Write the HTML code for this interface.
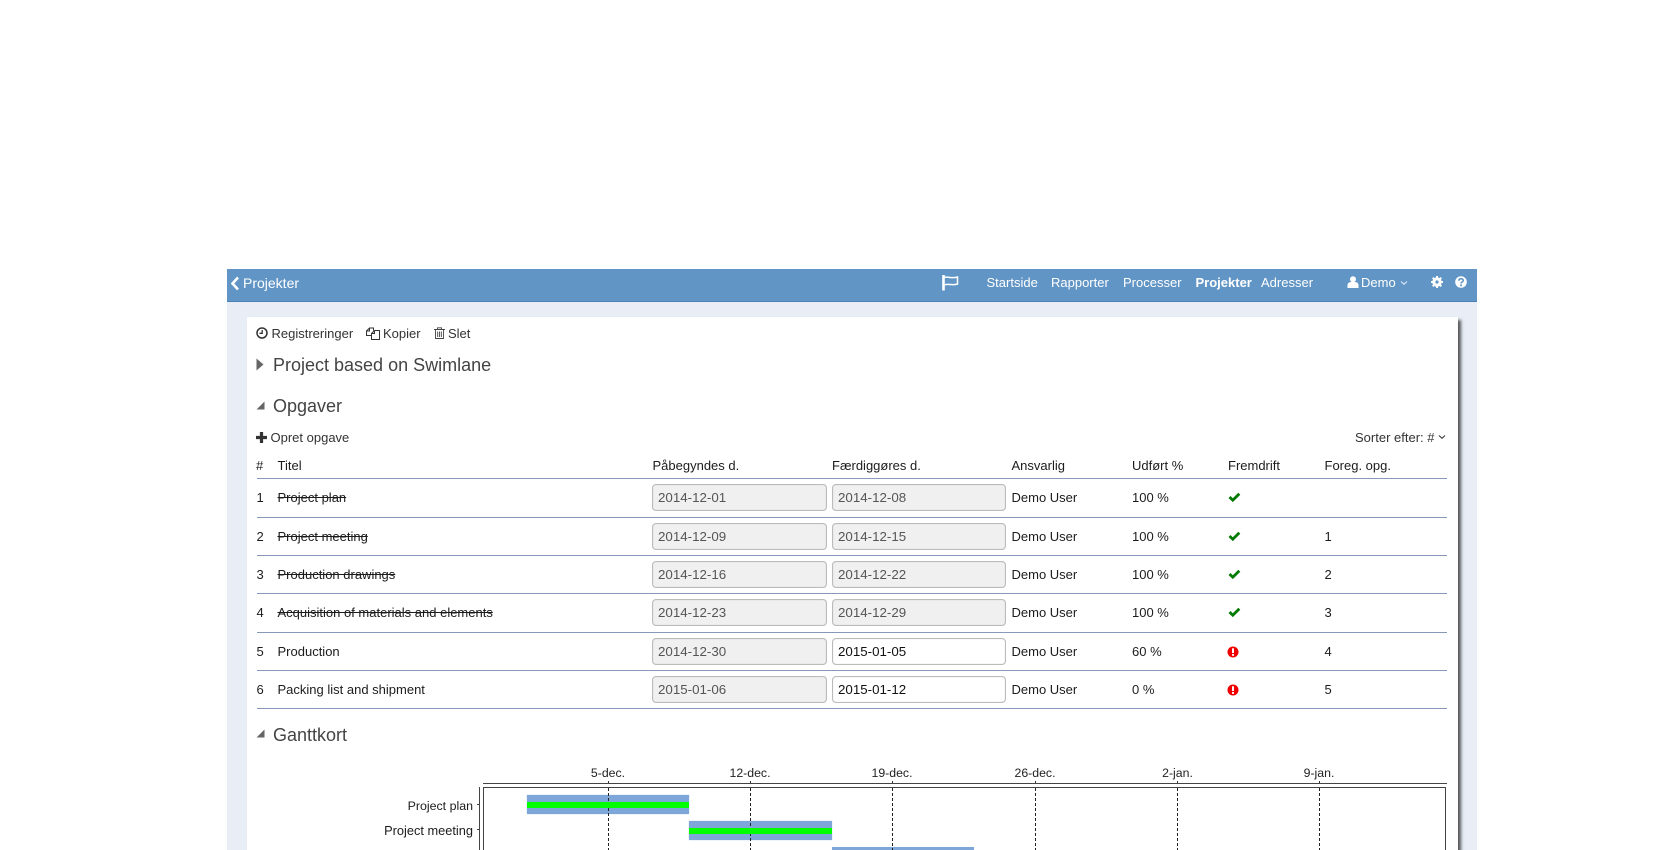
<!DOCTYPE html>
<html><head><meta charset="utf-8"><style>
html,body{margin:0;padding:0;background:#fff;width:1680px;height:850px;overflow:hidden}
body{position:relative;font-family:"Liberation Sans",sans-serif;font-size:13px;color:#1c1c1c}
.a,.t,.h,.n,.ip,.l,svg{position:absolute}
.t{line-height:16px;white-space:nowrap}
.n{line-height:16px;white-space:nowrap;color:#fff;top:275px}
.h{font-size:18px;line-height:22px;color:#444;left:273px;white-space:nowrap}
.l{left:257px;width:1190px;height:1px;background:#8898b8}
.ip{height:25px;border:1px solid #bbb;border-radius:4px;background:#f0f0f0;color:#555;font-size:13.333px;line-height:25px;padding-left:5px;width:168px;box-shadow:inset 0 0 1px #ccc}
.ip.c2{width:167px}
.ip.w{background:#fff;color:#111}
.s{text-decoration:line-through}
.tk{font-size:12.3px;line-height:14px;width:60px;text-align:center;top:766px;color:#222}
.gl{position:absolute;top:788px;height:62px;width:1px;background:repeating-linear-gradient(to bottom,#222 0,#222 3px,transparent 3px,transparent 5px)}
.tc{position:absolute;top:781px;height:2px;width:1px;background:#333}
</style></head><body>
<div class="a" style="left:227px;top:269px;width:1250px;height:581px;background:#e9eef6"></div>
<div class="a" style="left:227px;top:269px;width:1250px;height:32px;background:#6195c5;border-bottom:1px solid #4a82b8"></div>
<div class="a" style="left:247px;top:317px;width:1211px;height:540px;background:#fff;box-shadow:3px 3px 3px #555"></div>

<svg style="left:230px;top:276px" width="10" height="15" viewBox="0 0 10 15"><path d="M8 1.5L2.5 7.5L8 13.5" fill="none" stroke="#fff" stroke-width="2.6"/></svg>
<span class="n" style="left:243px;font-size:14px">Projekter</span>
<svg style="left:941px;top:275px" width="19" height="16" viewBox="0 0 19 16"><path d="M2.500 0V15.500" stroke="#fff" stroke-width="2.600"/><path d="M3 2.500C7 1 10 4 16.500 2V9C11 11 8 8 3 10" fill="none" stroke="#fff" stroke-width="1.500"/></svg>
<span class="n" style="left:986.500px">Startside</span>
<span class="n" style="left:1051px">Rapporter</span>
<span class="n" style="left:1123px">Processer</span>
<span class="n" style="left:1195.500px;font-weight:bold">Projekter</span>
<span class="n" style="left:1261px">Adresser</span>
<svg style="left:1347px;top:276px" width="12" height="12" viewBox="0 0 12 12"><circle cx="6" cy="3.200" r="3" fill="#fff"/><path d="M.5 12V9C.5 7 2.500 6 4 6H8C9.500 6 11.500 7 11.500 9V12Z" fill="#fff"/></svg>
<span class="n" style="left:1361px">Demo</span>
<svg style="left:1400px;top:280px" width="8" height="6" viewBox="0 0 8 6"><path d="M1 1.500L4 4.300L7 1.500" fill="none" stroke="#e8eef6" stroke-width="1"/></svg>
<svg style="left:1431px;top:276px" width="12" height="12" viewBox="0 0 12 12"><circle cx="6" cy="6" r="3.400" fill="none" stroke="#fff" stroke-width="2.600"/><path d="M6 0V12M0 6H12M1.700 1.700L10.300 10.300M10.300 1.700L1.700 10.300" stroke="#fff" stroke-width="2"/><circle cx="6" cy="6" r="1.600" fill="#6195c5"/></svg>
<svg style="left:1454.500px;top:276px" width="12" height="12" viewBox="0 0 12 12"><circle cx="6" cy="6" r="5.800" fill="#fff"/><path d="M3.800 4.700C3.800 2 8.300 2 8.300 4.500C8.300 6 6 6 6 7.500" fill="none" stroke="#6195c5" stroke-width="1.600"/><rect x="5.100" y="8.500" width="1.800" height="1.700" fill="#6195c5"/></svg>

<svg style="left:256px;top:327px" width="12" height="12" viewBox="0 0 12 12"><circle cx="6" cy="6" r="5" fill="none" stroke="#333" stroke-width="1.500"/><path d="M6.200 3V6.300H3.500" fill="none" stroke="#333" stroke-width="1.300"/></svg>
<span class="t" style="left:271.500px;top:326px;color:#333">Registreringer</span>
<svg style="left:366px;top:327px" width="15" height="13" viewBox="0 0 15 13"><path d="M5.500 8.500H.5V4L3.500 1H7.500V3.500" fill="none" stroke="#333" stroke-width="1"/><path d="M5.500 6.500L8.500 3.500H13.500V12.500H5.500ZM5.500 6.500H8.500V3.500M.5 4H3.500V1" fill="none" stroke="#333" stroke-width="1"/></svg>
<span class="t" style="left:383px;top:326px;color:#333">Kopier</span>
<svg style="left:434px;top:327px" width="11" height="12" viewBox="0 0 11 12"><path d="M0 2.500H11M3.500 2.500V.8H7.500V2.500M1.500 2.500V11.500H9.500V2.500M3.700 4.500V10M5.500 4.500V10M7.300 4.500V10" fill="none" stroke="#444" stroke-width=".9"/></svg>
<span class="t" style="left:448px;top:326px;color:#333">Slet</span>

<svg style="left:256px;top:358px" width="8" height="13" viewBox="0 0 8 13"><path d="M.5 .5L7.500 6.500L.5 12.500Z" fill="#666"/></svg>
<span class="h" style="top:354px">Project based on Swimlane</span>
<svg style="left:256px;top:401px" width="9" height="9" viewBox="0 0 9 9"><path d="M8.500 .5V8.500H.5Z" fill="#666"/></svg>
<span class="h" style="top:395px">Opgaver</span>

<svg style="left:256px;top:431.500px" width="11" height="11" viewBox="0 0 11 11"><path d="M5.500 0V11M0 5.500H11" stroke="#333" stroke-width="3.200"/></svg>
<span class="t" style="left:270.500px;top:430px;color:#333">Opret opgave</span>
<span class="t" style="left:1355px;top:430px;color:#333">Sorter efter: #</span>
<svg style="left:1438px;top:434px" width="8" height="6" viewBox="0 0 8 6"><path d="M1 1.500L4 4.300L7 1.500" fill="none" stroke="#333" stroke-width="1"/></svg>

<span class="t" style="left:256px;top:458px">#</span>
<span class="t" style="left:277.500px;top:458px">Titel</span>
<span class="t" style="left:652.500px;top:458px">Påbegyndes d.</span>
<span class="t" style="left:832px;top:458px">Færdiggøres d.</span>
<span class="t" style="left:1011.500px;top:458px">Ansvarlig</span>
<span class="t" style="left:1132px;top:458px">Udført %</span>
<span class="t" style="left:1228px;top:458px">Fremdrift</span>
<span class="t" style="left:1324.500px;top:458px">Foreg. opg.</span>

<div class="l" style="top:478px"></div>
<div class="l" style="top:517px"></div>
<div class="l" style="top:555px"></div>
<div class="l" style="top:593px"></div>
<div class="l" style="top:632px"></div>
<div class="l" style="top:670px"></div>
<div class="l" style="top:708px"></div>

<span class="t" style="left:256.500px;top:490px">1</span><span class="t s" style="left:277.500px;top:490px">Project plan</span>
<div class="ip" style="left:652px;top:484px">2014-12-01</div><div class="ip c2" style="left:832px;top:484px">2014-12-08</div>
<span class="t" style="left:1011.500px;top:490px">Demo User</span><span class="t" style="left:1132px;top:490px">100 %</span>
<svg style="left:1228px;top:492px" width="13" height="10" viewBox="0 0 13 10"><path d="M1.500 5L4.800 8.200L11.300 1.700" fill="none" stroke="#007a00" stroke-width="2.800"/></svg>

<span class="t" style="left:256.500px;top:529px">2</span><span class="t s" style="left:277.500px;top:529px">Project meeting</span>
<div class="ip" style="left:652px;top:523px">2014-12-09</div><div class="ip c2" style="left:832px;top:523px">2014-12-15</div>
<span class="t" style="left:1011.500px;top:529px">Demo User</span><span class="t" style="left:1132px;top:529px">100 %</span>
<svg style="left:1228px;top:531px" width="13" height="10" viewBox="0 0 13 10"><path d="M1.500 5L4.800 8.200L11.300 1.700" fill="none" stroke="#007a00" stroke-width="2.800"/></svg>
<span class="t" style="left:1324.500px;top:529px">1</span>

<span class="t" style="left:256.500px;top:567px">3</span><span class="t s" style="left:277.500px;top:567px">Production drawings</span>
<div class="ip" style="left:652px;top:561px">2014-12-16</div><div class="ip c2" style="left:832px;top:561px">2014-12-22</div>
<span class="t" style="left:1011.500px;top:567px">Demo User</span><span class="t" style="left:1132px;top:567px">100 %</span>
<svg style="left:1228px;top:569px" width="13" height="10" viewBox="0 0 13 10"><path d="M1.500 5L4.800 8.200L11.300 1.700" fill="none" stroke="#007a00" stroke-width="2.800"/></svg>
<span class="t" style="left:1324.500px;top:567px">2</span>

<span class="t" style="left:256.500px;top:605px">4</span><span class="t s" style="left:277.500px;top:605px">Acquisition of materials and elements</span>
<div class="ip" style="left:652px;top:599px">2014-12-23</div><div class="ip c2" style="left:832px;top:599px">2014-12-29</div>
<span class="t" style="left:1011.500px;top:605px">Demo User</span><span class="t" style="left:1132px;top:605px">100 %</span>
<svg style="left:1228px;top:607px" width="13" height="10" viewBox="0 0 13 10"><path d="M1.500 5L4.800 8.200L11.300 1.700" fill="none" stroke="#007a00" stroke-width="2.800"/></svg>
<span class="t" style="left:1324.500px;top:605px">3</span>

<span class="t" style="left:256.500px;top:644px">5</span><span class="t" style="left:277.500px;top:644px">Production</span>
<div class="ip" style="left:652px;top:638px">2014-12-30</div><div class="ip w c2" style="left:832px;top:638px">2015-01-05</div>
<span class="t" style="left:1011.500px;top:644px">Demo User</span><span class="t" style="left:1132px;top:644px">60 %</span>
<svg style="left:1227px;top:645.500px" width="12" height="12" viewBox="0 0 12 12"><circle cx="6" cy="6" r="5.500" fill="#f00000"/><rect x="5" y="2.300" width="2" height="4.700" fill="#fff"/><rect x="5" y="8" width="2" height="1.800" fill="#fff"/></svg>
<span class="t" style="left:1324.500px;top:644px">4</span>

<span class="t" style="left:256.500px;top:682px">6</span><span class="t" style="left:277.500px;top:682px">Packing list and shipment</span>
<div class="ip" style="left:652px;top:676px">2015-01-06</div><div class="ip w c2" style="left:832px;top:676px">2015-01-12</div>
<span class="t" style="left:1011.500px;top:682px">Demo User</span><span class="t" style="left:1132px;top:682px">0 %</span>
<svg style="left:1227px;top:683.500px" width="12" height="12" viewBox="0 0 12 12"><circle cx="6" cy="6" r="5.500" fill="#f00000"/><rect x="5" y="2.300" width="2" height="4.700" fill="#fff"/><rect x="5" y="8" width="2" height="1.800" fill="#fff"/></svg>
<span class="t" style="left:1324.500px;top:682px">5</span>

<svg style="left:256px;top:729px" width="9" height="9" viewBox="0 0 9 9"><path d="M8.500 .5V8.500H.5Z" fill="#666"/></svg>
<span class="h" style="top:724px">Ganttkort</span>

<span class="t tk" style="left:578px">5-dec.</span>
<span class="t tk" style="left:720px">12-dec.</span>
<span class="t tk" style="left:862px">19-dec.</span>
<span class="t tk" style="left:1005px">26-dec.</span>
<span class="t tk" style="left:1147.500px">2-jan.</span>
<span class="t tk" style="left:1289px">9-jan.</span>

<div class="a" style="left:483px;top:783px;width:964px;height:1px;background:#444"></div>
<div class="a" style="left:483px;top:787px;width:961px;height:70px;border:1px solid #444"></div>
<div class="a" style="left:479px;top:787px;width:1px;height:63px;background:#444"></div>
<div class="a" style="left:477px;top:804px;width:2px;height:1px;background:#444"></div>
<div class="a" style="left:477px;top:829px;width:2px;height:1px;background:#444"></div>

<span class="t" style="right:1207px;top:798px;font-size:12.4px">Project plan</span>
<span class="t" style="right:1207px;top:823px;font-size:12.8px">Project meeting</span>

<div class="a" style="left:527px;top:795px;width:162px;height:19px;background:#7fa6d9;box-shadow:0 0 1px #a8c4e8"></div>
<div class="a" style="left:689px;top:821px;width:143px;height:19px;background:#7fa6d9;box-shadow:0 0 1px #a8c4e8"></div>
<div class="a" style="left:832px;top:847px;width:142px;height:5px;background:#7fa6d9"></div>

<div class="tc" style="left:608px"></div><div class="tc" style="left:750px"></div><div class="tc" style="left:892px"></div><div class="tc" style="left:1035px"></div><div class="tc" style="left:1177px"></div><div class="tc" style="left:1319px"></div>
<div class="gl" style="left:608px"></div>
<div class="gl" style="left:750px"></div>
<div class="gl" style="left:892px"></div>
<div class="gl" style="left:1035px"></div>
<div class="gl" style="left:1177px"></div>
<div class="gl" style="left:1319px"></div>

<div class="a" style="left:527px;top:802px;width:162px;height:6px;background:#00ff00"></div>
<div class="a" style="left:689px;top:828px;width:143px;height:6px;background:#00ff00"></div>
</body></html>
